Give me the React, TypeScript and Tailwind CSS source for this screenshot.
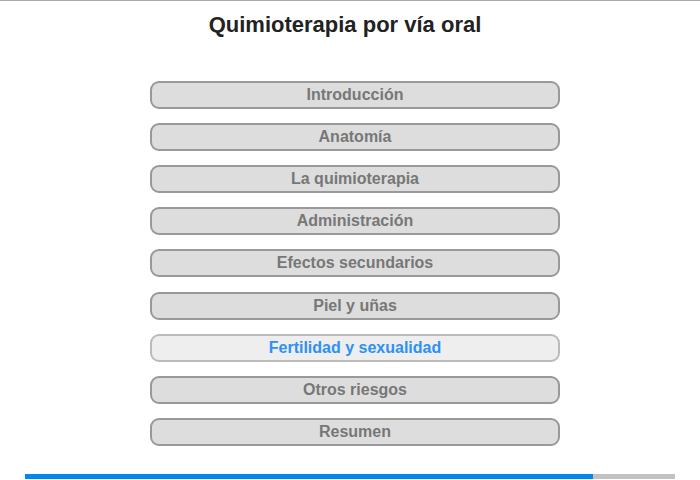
import React from "react";

const items = [
  "Introducción",
  "Anatomía",
  "La quimioterapia",
  "Administración",
  "Efectos secundarios",
  "Piel y uñas",
  "Fertilidad y sexualidad",
  "Otros riesgos",
  "Resumen",
];

export default function App() {
  return (
    <div
      className="w-[700px] h-[480px] bg-white border-t border-[#aaaaaa] relative overflow-hidden"
      style={{ fontFamily: '"Liberation Sans", Arial, sans-serif' }}
    >
      <h1 className="text-center text-[22px] leading-[26px] font-bold text-[#222222] pt-[11px] pr-[10px]">
        Quimioterapia por vía oral
      </h1>
      <div className="flex flex-col gap-[14.12px] w-[410px] ml-[150px] mt-[43px]">
        {items.map((t, i) => {
          const active = i === 6;
          return (
            <div
              key={t}
              className={
                active
                  ? "h-[28px] rounded-[9px] border-2 border-[#bbbbbb] bg-[#eeeeee] flex items-center justify-center text-[16px] font-bold text-[#2d91f5]"
                  : "h-[28px] rounded-[9px] border-2 border-[#999999] bg-[#dddddd] flex items-center justify-center text-[16px] font-bold text-[#777777]"
              }
            >
              {t}
            </div>
          );
        })}
      </div>
      <div className="absolute left-[25px] top-[473px] w-[650px] h-[5px] bg-[#c2c2c2] flex">
        <div className="h-full w-[568px] bg-[#0088f0]" />
      </div>
    </div>
  );
}
